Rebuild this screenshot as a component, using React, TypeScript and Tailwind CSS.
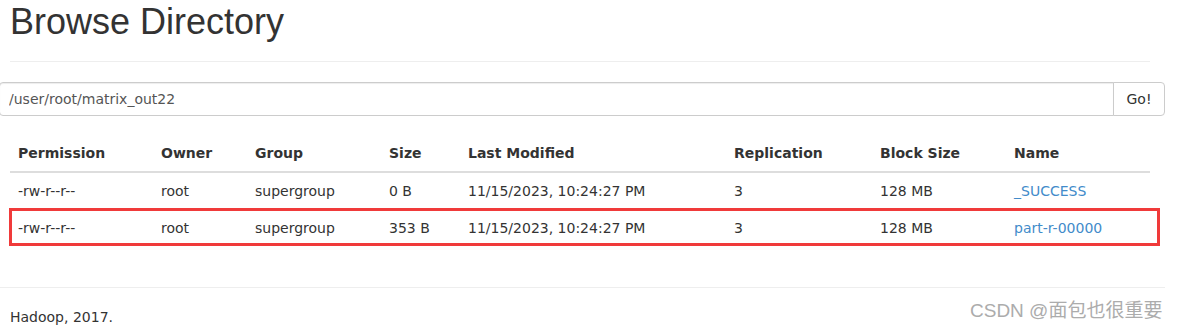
const rows = [
  { perm: '-rw-r--r--', owner: 'root', group: 'supergroup', size: '0 B', modified: '11/15/2023, 10:24:27 PM', repl: '3', block: '128 MB', name: '_SUCCESS' },
  { perm: '-rw-r--r--', owner: 'root', group: 'supergroup', size: '353 B', modified: '11/15/2023, 10:24:27 PM', repl: '3', block: '128 MB', name: 'part-r-00000' },
];

const cols = [
  { label: 'Permission', w: 'w-[143px]' },
  { label: 'Owner', w: 'w-[94px]' },
  { label: 'Group', w: 'w-[134px]' },
  { label: 'Size', w: 'w-[79px]' },
  { label: 'Last Modified', w: 'w-[266px]' },
  { label: 'Replication', w: 'w-[146px]' },
  { label: 'Block Size', w: 'w-[134px]' },
  { label: 'Name', w: 'w-[144px]' },
];

export default function App() {
  return (
    <div className="relative w-[1177px] h-[331px] overflow-hidden bg-white text-[#333] text-[14px] leading-[20px] font-['DejaVu_Sans',sans-serif]">
      <div className="pl-[10px] w-[1150px]">
        <h1 className="mt-[2px] text-[36px] leading-[40px] font-normal font-['Liberation_Sans',Arial,sans-serif]">
          Browse Directory
        </h1>
        <hr className="mt-[19px] border-0 border-t border-[#eee]" />
      </div>

      <div className="mt-[20px] -ml-px w-[1166px] flex h-[34px]">
        <input
          readOnly
          value="/user/root/matrix_out22"
          className="flex-1 h-full border border-[#ccc] rounded-l-[4px] px-[9px] text-[14px] text-[#555] shadow-[inset_0_1px_1px_rgba(0,0,0,0.075)] outline-none font-['DejaVu_Sans',sans-serif]"
        />
        <button
          type="button"
          className="w-[52px] h-full border border-[#ccc] -ml-px rounded-r-[4px] bg-white text-[14px] text-[#333]"
        >
          Go!
        </button>
      </div>

      <div className="pl-[10px] mt-[19px]">
        <table className="w-[1140px] table-fixed border-collapse">
          <thead>
            <tr>
              {cols.map((c) => (
                <th key={c.label} className={`${c.w} text-left font-bold px-[8px] py-[8px] border-b-2 border-[#ddd]`}>
                  {c.label}
                </th>
              ))}
            </tr>
          </thead>
          <tbody>
            {rows.map((r) => (
              <tr key={r.name} className="border-t border-[#ddd]">
                <td className="p-[8px]">{r.perm}</td>
                <td className="p-[8px]">{r.owner}</td>
                <td className="p-[8px]">{r.group}</td>
                <td className="p-[8px]">{r.size}</td>
                <td className="p-[8px]">{r.modified}</td>
                <td className="p-[8px]">{r.repl}</td>
                <td className="p-[8px]">{r.block}</td>
                <td className="p-[8px]">
                  <a href="#" className="text-[#428bca]">{r.name}</a>
                </td>
              </tr>
            ))}
          </tbody>
        </table>
      </div>

      <hr className="mt-[41px] w-[1165px] border-0 border-t border-[#eee]" />
      <p className="pl-[10px] mt-[19px] text-[14px] leading-[20px]">Hadoop, 2017.</p>

      {/* annotation box */}
      <div className="absolute left-[9px] top-[208px] w-[1151px] h-[38px] border-[3px] border-[#f03a3a]" />
      {/* watermark */}
      <div className="absolute left-[970px] top-[298px] text-[19px] leading-[26px] text-[#acacac] font-['Liberation_Sans','Noto_Sans_CJK_SC',sans-serif]">
        CSDN @面包也很重要
      </div>
    </div>
  );
}
